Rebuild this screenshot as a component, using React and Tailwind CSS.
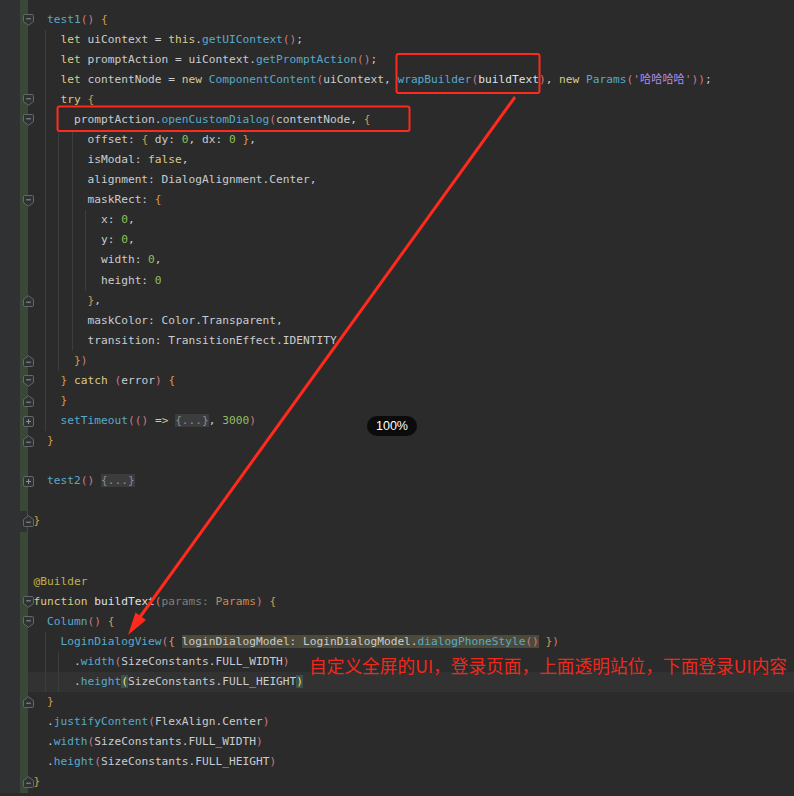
const tone = {
  p: 'text-[#c9ccd1]',
  k: 'text-[#dcc98a]',
  f: 'text-[#57aacb]',
  n: 'text-[#8fbf5c]',
  pa: 'text-[#d07983]',
  br: 'text-[#d49a4c]',
  s: 'text-[#b48ae6]',
  q: 'text-[#d07983]',
  a: 'text-[#c0b04c]',
  g: 'text-[#7c7f84]',
  t: 'text-[#c98a4b]',
  w: 'text-[#dfe1e5]',
  fold: 'bg-[#3a3c3e] text-[#8a8d91]',
  hint: 'bg-[#4d4a39]',
  m: 'bg-[#3b514d] text-[#e8e36a]',
}

const lines = [
  { i: 2, fold: 'start', t: [['f', 'test1'], ['pa', '()'], ['p', ' '], ['br', '{']] },
  { i: 4, t: [['k', 'let'], ['p', ' uiContext = '], ['k', 'this'], ['p', '.'], ['f', 'getUIContext'], ['pa', '()'], ['p', ';']] },
  { i: 4, t: [['k', 'let'], ['p', ' promptAction = uiContext.'], ['f', 'getPromptAction'], ['pa', '()'], ['p', ';']] },
  {
    i: 4,
    t: [
      ['k', 'let'], ['p', ' contentNode = '], ['k', 'new'], ['p', ' '], ['f', 'ComponentContent'], ['pa', '('],
      ['p', 'uiContext, '], ['f', 'wrapBuilder'], ['pa', '('], ['w', 'buildText'], ['pa', ')'], ['p', ', '],
      ['k', 'new'], ['p', ' '], ['f', 'Params'], ['pa', '('], ['q', "'"], ['s', '哈哈哈哈'], ['q', "'"], ['pa', '))'], ['p', ';'],
    ],
  },
  { i: 4, fold: 'start', t: [['k', 'try'], ['p', ' '], ['br', '{']] },
  { i: 6, fold: 'start', t: [['p', 'promptAction.'], ['f', 'openCustomDialog'], ['pa', '('], ['p', 'contentNode, '], ['br', '{']] },
  { i: 8, t: [['p', 'offset: '], ['br', '{'], ['p', ' dy: '], ['n', '0'], ['p', ', dx: '], ['n', '0'], ['p', ' '], ['br', '}'], ['p', ',']] },
  { i: 8, t: [['p', 'isModal: '], ['k', 'false'], ['p', ',']] },
  { i: 8, t: [['p', 'alignment: DialogAlignment.Center,']] },
  { i: 8, fold: 'start', t: [['p', 'maskRect: '], ['br', '{']] },
  { i: 10, t: [['p', 'x: '], ['n', '0'], ['p', ',']] },
  { i: 10, t: [['p', 'y: '], ['n', '0'], ['p', ',']] },
  { i: 10, t: [['p', 'width: '], ['n', '0'], ['p', ',']] },
  { i: 10, t: [['p', 'height: '], ['n', '0']] },
  { i: 8, fold: 'end', t: [['br', '}'], ['p', ',']] },
  { i: 8, t: [['p', 'maskColor: Color.Transparent,']] },
  { i: 8, t: [['p', 'transition: TransitionEffect.IDENTITY']] },
  { i: 6, fold: 'end', t: [['br', '}'], ['pa', ')']] },
  { i: 4, fold: 'start', t: [['br', '}'], ['p', ' '], ['k', 'catch'], ['p', ' '], ['pa', '('], ['p', 'error'], ['pa', ')'], ['p', ' '], ['br', '{']] },
  { i: 4, fold: 'end', t: [['br', '}']] },
  {
    i: 4,
    fold: 'closed',
    t: [['f', 'setTimeout'], ['pa', '('], ['pa', '()'], ['p', ' '], ['k', '=>'], ['p', ' '], ['fold', '{...}'], ['p', ', '], ['n', '3000'], ['pa', ')']],
  },
  { i: 2, fold: 'end', t: [['br', '}']] },
  { i: 0, t: [] },
  { i: 2, fold: 'closed', t: [['f', 'test2'], ['pa', '()'], ['p', ' '], ['fold', '{...}']] },
  { i: 0, t: [] },
  { i: 0, fold: 'end', gap: true, t: [['br', '}']] },
  { i: 0, t: [] },
  { i: 0, t: [] },
  { i: 0, t: [['a', '@Builder']] },
  {
    i: 0,
    fold: 'start',
    t: [['k', 'function'], ['p', ' '], ['w', 'buildText'], ['pa', '('], ['g', 'params: '], ['t', 'Params'], ['pa', ')'], ['p', ' '], ['br', '{']],
  },
  { i: 2, fold: 'start', t: [['f', 'Column'], ['pa', '()'], ['p', ' '], ['br', '{']] },
  {
    i: 4,
    t: [
      ['f', 'LoginDialogView'], ['pa', '('], ['br', '{'], ['p', ' '],
      ['hint', [['p', 'loginDialogModel: LoginDialogModel.'], ['f', 'dialogPhoneStyle'], ['pa', '()']]],
      ['p', ' '], ['br', '}'], ['pa', ')'],
    ],
  },
  { i: 6, t: [['p', '.'], ['f', 'width'], ['pa', '('], ['p', 'SizeConstants.FULL_WIDTH'], ['pa', ')']] },
  { i: 6, current: true, t: [['p', '.'], ['f', 'height'], ['m', '('], ['p', 'SizeConstants.FULL_HEIGHT'], ['m', ')']] },
  { i: 2, fold: 'end', t: [['br', '}']] },
  { i: 2, t: [['p', '.'], ['f', 'justifyContent'], ['pa', '('], ['p', 'FlexAlign.Center'], ['pa', ')']] },
  { i: 2, t: [['p', '.'], ['f', 'width'], ['pa', '('], ['p', 'SizeConstants.FULL_WIDTH'], ['pa', ')']] },
  { i: 2, t: [['p', '.'], ['f', 'height'], ['pa', '('], ['p', 'SizeConstants.FULL_HEIGHT'], ['pa', ')']] },
  { i: 0, fold: 'end', t: [['br', '}']] },
]

// indent guides: column and line range
const guides = [
  { col: 2, from: 1, to: 20 },
  { col: 4, from: 5, to: 17 },
  { col: 6, from: 6, to: 16 },
  { col: 8, from: 10, to: 13 },
  { col: 2, from: 31, to: 33 },
  { col: 4, from: 32, to: 33 },
]

const guideLeft = { 2: 'left-[16.8px]', 4: 'left-[30.2px]', 6: 'left-[43.7px]', 8: 'left-[57.1px]' }

function FoldIcon({ kind }) {
  if (kind === 'start') {
    return (
      <svg width="11" height="12" viewBox="0 0 11 12" className="absolute left-[22.5px] top-[4.5px]">
        <path d="M0.5 1.5 Q0.5 0.5 1.5 0.5 H9.5 Q10.5 0.5 10.5 1.5 V7.5 L5.5 11.3 L0.5 7.5 Z" fill="#2f3133" stroke="#65686b" />
        <path d="M3.2 4.8 H7.8" stroke="#8c8f93" strokeWidth="1.1" />
      </svg>
    )
  }
  if (kind === 'end') {
    return (
      <svg width="11" height="12" viewBox="0 0 11 12" className="absolute left-[22.5px] top-[4px]">
        <path d="M0.5 10.5 Q0.5 11.5 1.5 11.5 H9.5 Q10.5 11.5 10.5 10.5 V4.5 L5.5 0.7 L0.5 4.5 Z" fill="#2f3133" stroke="#65686b" />
        <path d="M3.2 7.2 H7.8" stroke="#8c8f93" strokeWidth="1.1" />
      </svg>
    )
  }
  return (
    <svg width="11" height="11" viewBox="0 0 11 11" className="absolute left-[22.5px] top-[4.5px]">
      <rect x="0.5" y="0.5" width="10" height="10" rx="1.5" fill="#2f3133" stroke="#65686b" />
      <path d="M3 5.5 H8 M5.5 3 V8" stroke="#8c8f93" strokeWidth="1.1" />
    </svg>
  )
}

function Tokens({ items }) {
  return items.map(([c, text], j) => {
    if (c === 'hint') {
      return (
        <span key={j} className={tone.hint}>
          <Tokens items={text} />
        </span>
      )
    }
    return (
      <span key={j} className={tone[c]}>
        {text}
      </span>
    )
  })
}

function Line({ line, idx }) {
  const green = !line.gap
  return (
    <div className={`relative flex h-[20.08px] ${line.current ? 'bg-[#323232]' : ''}`}>
      <div className="w-[20px] shrink-0 bg-[#2f3133]" />
      <div className={`w-[8px] shrink-0 ${green ? 'bg-[#3a4838]' : 'bg-[#2f3133] border-r border-[#46484b]'}`} />
      <div className="relative flex-1 pl-[5.6px] whitespace-pre leading-[20.08px]">
        {guides
          .filter((g) => idx >= g.from && idx <= g.to)
          .map((g, j) => (
            <div key={j} className={`absolute top-0 bottom-0 w-px bg-[#3b3d40] ${guideLeft[g.col]}`} />
          ))}
        <span className="relative">
          {' '.repeat(line.i)}
          <Tokens items={line.t} />
        </span>
      </div>
      {line.fold && <FoldIcon kind={line.fold} />}
    </div>
  )
}

function Annotations() {
  return (
    <svg width="794" height="796" className="pointer-events-none absolute left-0 top-0">
      <rect x="396.5" y="54" width="143" height="39" rx="2" fill="none" stroke="#ff2a1c" strokeWidth="2" />
      <rect x="57.5" y="106.5" width="352" height="24.5" rx="2" fill="none" stroke="#ff2a1c" strokeWidth="2" />
      <line x1="515" y1="97" x2="140" y2="617" stroke="#ff2a1c" strokeWidth="3" />
      <polygon points="128,635 146,620 135.5,612.5" fill="#ff2a1c" />
    </svg>
  )
}

export default function App() {
  return (
    <div className="relative h-[796px] w-[794px] overflow-hidden bg-[#2b2b2b] font-['DejaVu_Sans_Mono','Noto_Sans_CJK_SC',monospace] text-[11.2px]">
      <div className="flex h-[9.5px]">
        <div className="w-[20px] bg-[#2f3133]" />
        <div className="w-[8px] bg-[#3a4838]" />
      </div>
      {lines.map((line, idx) => (
        <Line key={idx} line={line} idx={idx} />
      ))}

      <Annotations />

      <div className="absolute left-[309px] top-[653px] whitespace-nowrap font-['Noto_Sans_CJK_SC',sans-serif] text-[17.7px] leading-[24px] text-[#f0281c]">
        自定义全屏的UI，登录页面，上面透明站位，下面登录UI内容
      </div>

      <div className="absolute left-[367px] top-[416px] flex h-[20px] w-[50px] items-center justify-center rounded-full bg-[#0b0b0b] font-['Liberation_Sans',Arial,sans-serif] text-[12.5px] text-white">
        100%
      </div>
    </div>
  )
}
